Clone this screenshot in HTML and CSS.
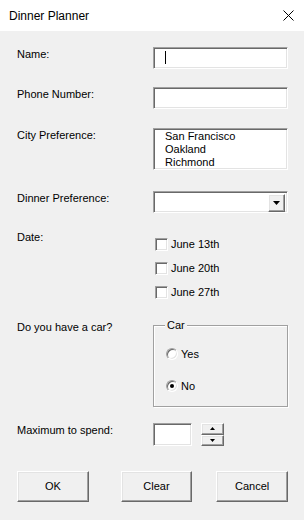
FILE: index.html
```html
<!DOCTYPE html>
<html lang="en">
<head>
    <meta charset="UTF-8">
    <meta name="viewport" content="width=device-width, initial-scale=1.0">
    <title>Dinner Planner</title>
    <link rel="stylesheet" href="styles.css">
</head>
<body>
    <div class="titlebar">
        <span class="title">Dinner Planner</span>
        <svg class="close" width="11" height="11" viewBox="0 0 11 11">
            <path d="M0.5 0.5 L10.5 10.5 M10.5 0.5 L0.5 10.5" stroke="#000" stroke-width="1" fill="none"/>
        </svg>
    </div>

    <div class="form">
        <div class="row row-name">
            <label class="label">Name:</label>
            <div class="field-wrap">
                <input type="text" class="field">
                <span class="caret"></span>
            </div>
        </div>

        <div class="row row-phone">
            <label class="label">Phone Number:</label>
            <input type="text" class="field">
        </div>

        <div class="row row-city">
            <label class="label">City Preference:</label>
            <div class="listbox">
                <div class="item">San Francisco</div>
                <div class="item">Oakland</div>
                <div class="item">Richmond</div>
            </div>
        </div>

        <div class="row row-dinner">
            <label class="label">Dinner Preference:</label>
            <div class="combo">
                <span class="combo-btn">
                    <svg width="7" height="4" viewBox="0 0 7 4"><polygon points="0,0 7,0 3.5,4" fill="#000"/></svg>
                </span>
            </div>
        </div>

        <div class="row row-date">
            <label class="label">Date:</label>
            <div class="checks">
                <div class="check-row"><span class="checkbox"></span>June 13th</div>
                <div class="check-row"><span class="checkbox"></span>June 20th</div>
                <div class="check-row"><span class="checkbox"></span>June 27th</div>
            </div>
        </div>

        <div class="row row-car">
            <label class="label">Do you have a car?</label>
            <div class="group">
                <span class="legend">Car</span>
                <div class="radio-row"><span class="radio"></span>Yes</div>
                <div class="radio-row"><span class="radio checked"></span>No</div>
            </div>
        </div>

        <div class="row row-max">
            <label class="label">Maximum to spend:</label>
            <input type="text" class="field spin-field">
            <div class="spinner">
                <span class="spin-btn">
                    <svg width="5" height="3" viewBox="0 0 5 3"><polygon points="0,3 5,3 2.5,0" fill="#000"/></svg>
                </span>
                <span class="spin-btn">
                    <svg width="5" height="3" viewBox="0 0 5 3"><polygon points="0,0 5,0 2.5,3" fill="#000"/></svg>
                </span>
            </div>
        </div>

        <div class="buttons">
            <button class="btn">OK</button>
            <button class="btn btn-clear">Clear</button>
            <button class="btn btn-cancel">Cancel</button>
        </div>
    </div>
</body>
</html>
```

FILE: styles.css
```css
* {
    box-sizing: border-box;
    margin: 0;
    padding: 0;
}

body {
    width: 304px;
    height: 520px;
    overflow: hidden;
    background: #f0f0f0;
    color: #000;
    font: 11px/13px "Liberation Sans", Arial, sans-serif;
}

.titlebar {
    height: 31px;
    background: #fff;
    display: flex;
    align-items: center;
    justify-content: space-between;
    padding: 0 10px 0 9px;
}

.title {
    font-size: 12px;
    line-height: 14px;
}

.close {
    display: block;
    margin-top: -1px;
}

.form {
    padding: 16px 16px 0 17px;
}

.row {
    display: flex;
    align-items: flex-start;
}

.label {
    width: 136px;
    flex-shrink: 0;
    padding-top: 1px;
}

/* sunken 3d edge, like a classic windows edit box */
.field,
.listbox,
.combo,
.checkbox {
    border: 1px solid;
    border-color: #a0a0a0 #fff #fff #a0a0a0;
    box-shadow: inset 1px 1px #696969, inset -1px -1px #e3e3e3;
    background: #fff;
}

.field {
    display: block;
    width: 135px;
    height: 22px;
    font: inherit;
    outline: none;
    appearance: none;
    border-radius: 0;
}

.field-wrap {
    position: relative;
}

.caret {
    position: absolute;
    left: 12px;
    top: 4px;
    width: 1px;
    height: 13px;
    background: #000;
}

.row-phone {
    margin-top: 18px;
}

.row-city {
    margin-top: 19px;
}

.listbox {
    width: 135px;
    height: 42px;
    padding: 1px 0 0 11px;
    overflow: hidden;
}

.row-dinner {
    margin-top: 21px;
}

.combo {
    width: 135px;
    height: 22px;
    display: flex;
    justify-content: flex-end;
    padding: 2px;
}

/* raised 3d edge for buttons */
.combo-btn,
.spin-btn,
.btn {
    border: 1px solid;
    border-color: #fff #696969 #696969 #fff;
    box-shadow: inset -1px -1px #a0a0a0, inset 1px 1px #e3e3e3;
    background: #f0f0f0;
}

.combo-btn {
    width: 17px;
    height: 18px;
    display: flex;
    align-items: center;
    justify-content: center;
}

.row-date {
    margin-top: 17px;
}

.checks {
    padding: 2px 0 0 2px;
}

.check-row {
    height: 24px;
    display: flex;
    align-items: center;
}

.checkbox {
    width: 13px;
    height: 13px;
    margin-right: 3px;
}

.row-car {
    margin-top: 15px;
}

.row-car .label {
    padding-top: 2px;
}

.group {
    position: relative;
    width: 135px;
    margin-top: 6px;
    padding: 16px 0 8px 12px;
    border: 1px solid #a0a0a0;
    box-shadow: inset 1px 1px #fff, 1px 1px #fff;
    display: flex;
    flex-direction: column;
    gap: 8px;
}

.legend {
    position: absolute;
    top: -7px;
    left: 11px;
    padding: 0 2px;
    background: #f0f0f0;
}

.radio-row {
    height: 24px;
    display: flex;
    align-items: center;
}

.radio {
    width: 12px;
    height: 12px;
    margin-right: 3px;
    border-radius: 50%;
    border: 1px solid;
    border-color: #a0a0a0 #fff #fff #a0a0a0;
    box-shadow: inset 1px 1px #696969, inset -1px -1px #e3e3e3;
    background: #fff;
    display: flex;
    align-items: center;
    justify-content: center;
}

.radio.checked::after {
    content: "";
    width: 4px;
    height: 4px;
    border-radius: 50%;
    background: #000;
}

.row-max {
    margin-top: 16px;
}

.spin-field {
    width: 39px;
    height: 23px;
}

.spinner {
    margin-left: 9px;
    width: 23px;
    height: 23px;
    display: flex;
    flex-direction: column;
}

.spin-btn {
    flex: 1;
    display: flex;
    align-items: center;
    justify-content: center;
}

.buttons {
    display: flex;
    margin-top: 25px;
}

.btn {
    width: 72px;
    height: 31px;
    font: inherit;
    color: #000;
}

.btn-clear {
    margin-left: 32px;
}

.btn-cancel {
    margin-left: 24px;
}
```
